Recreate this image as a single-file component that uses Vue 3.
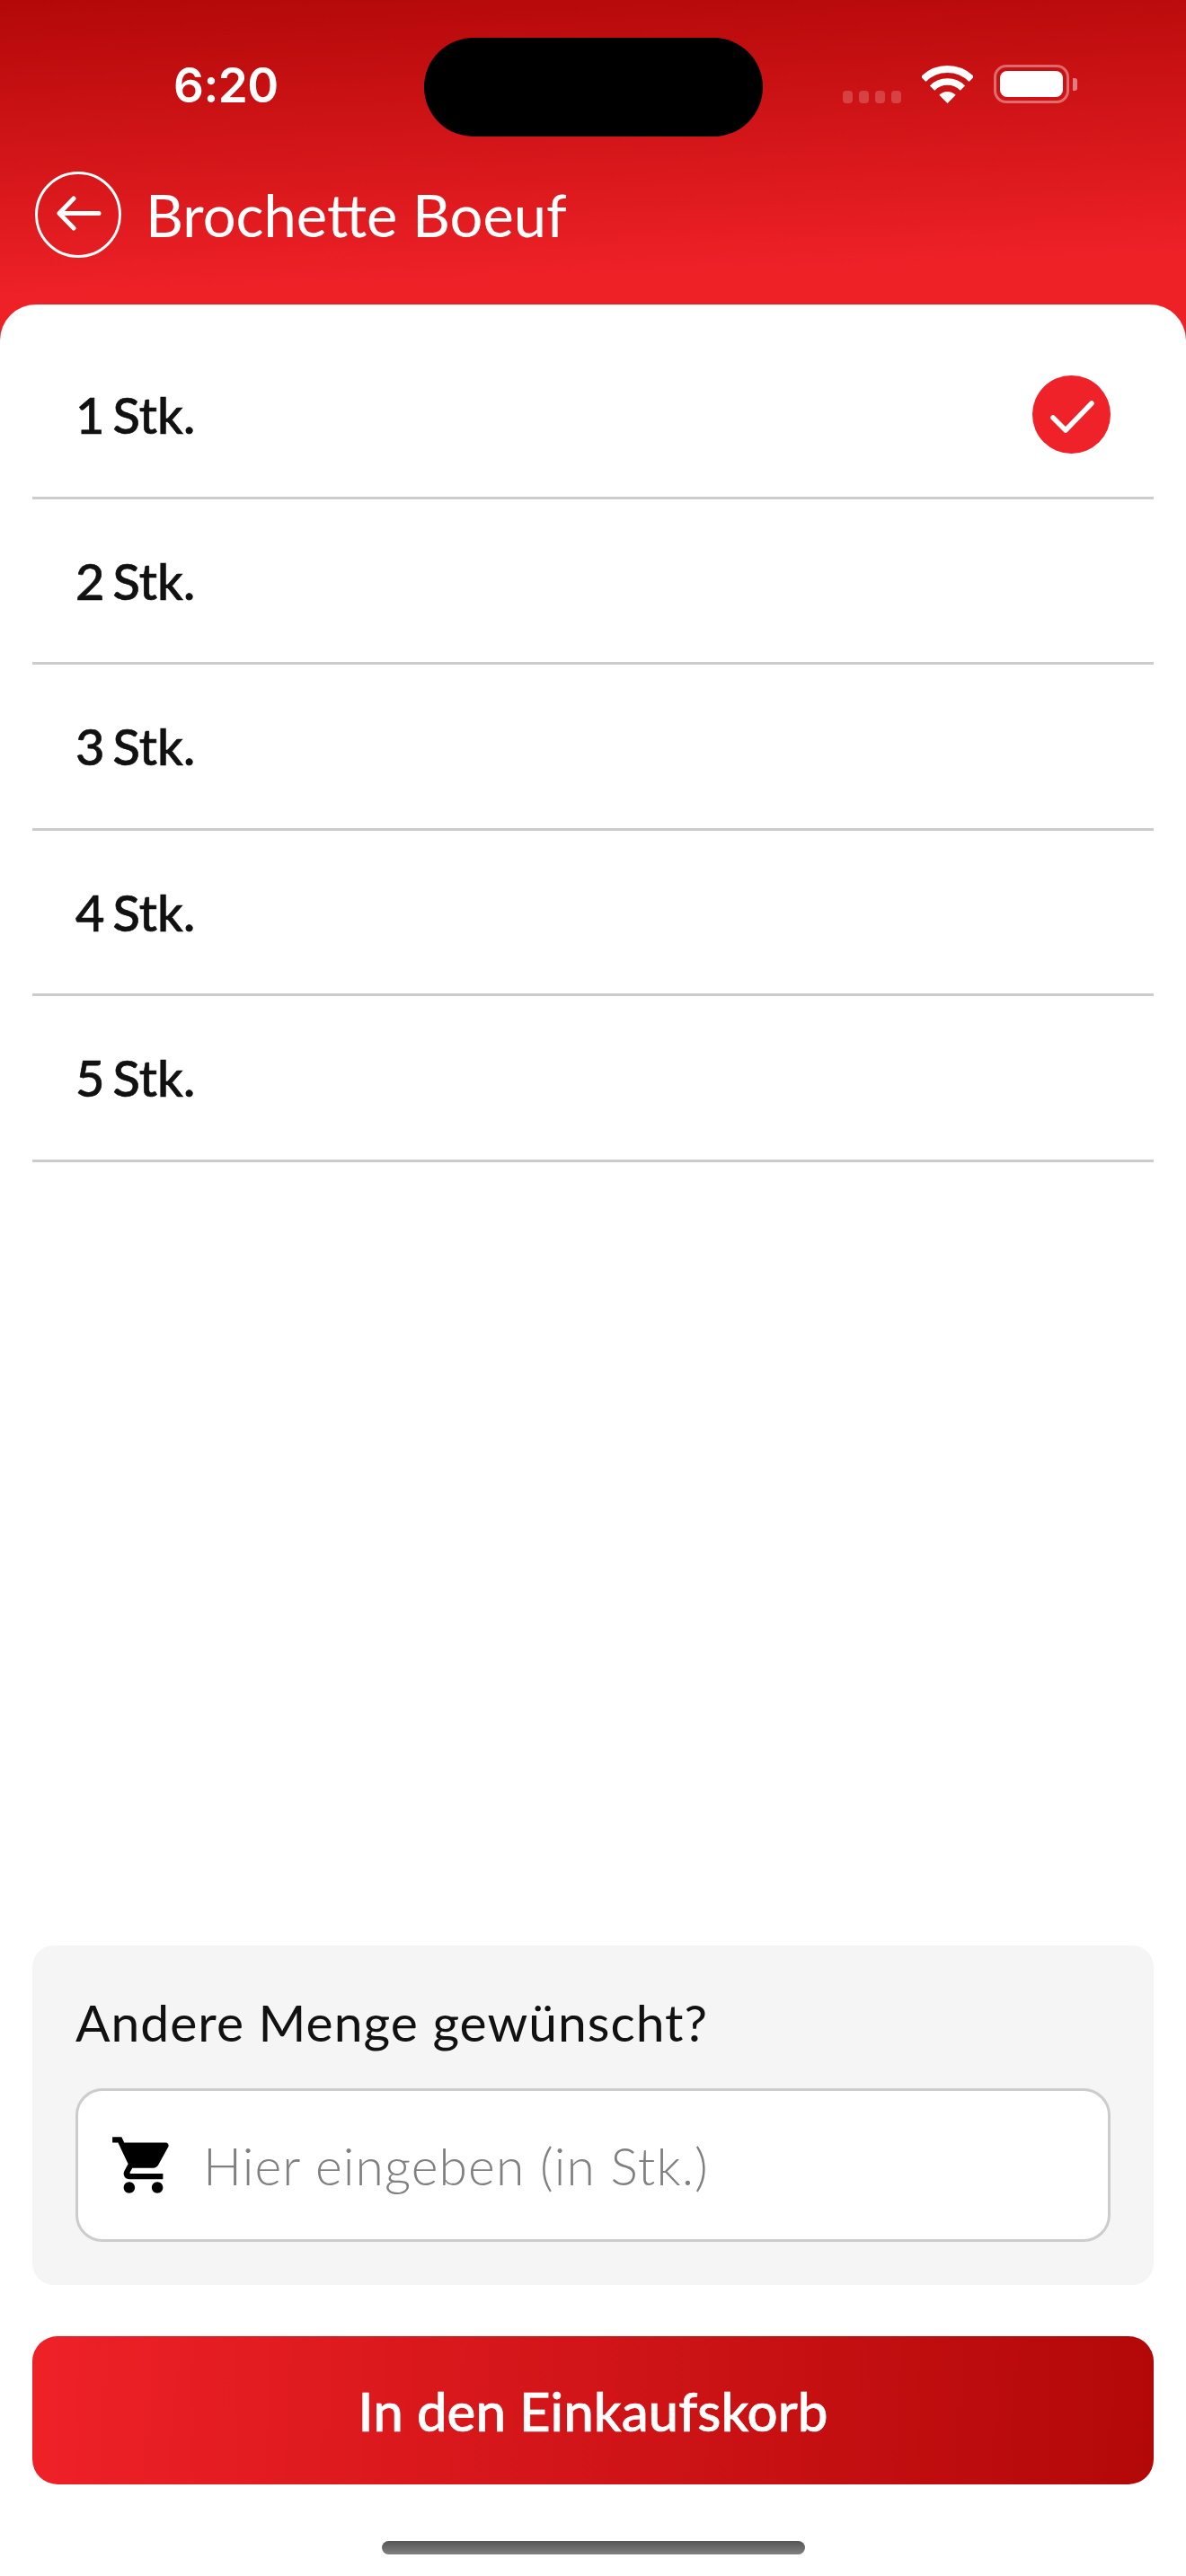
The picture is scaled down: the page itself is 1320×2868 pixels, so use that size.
<template>
  <div class="phone">
    <header class="header">
      <div class="status">
        <div class="time">6:20</div>
        <div class="island"></div>
        <div class="status-icons">
          <div class="dots">
            <span v-for="n in 4" :key="n" class="dot"></span>
          </div>
          <svg class="wifi" width="57" height="42" viewBox="0 0 57 42">
            <path d="M1.63 15.13A38 38 0 0 1 55.37 15.13" fill="none" stroke="#fff" stroke-width="8" />
            <path d="M11.53 25.03A24 24 0 0 1 45.47 25.03" fill="none" stroke="#fff" stroke-width="7.5" />
            <path d="M28.5 42L19.3 32.8A13 13 0 0 1 37.7 32.8Z" fill="#fff" />
          </svg>
          <div class="battery"><div class="battery-fill"></div></div>
          <div class="battery-cap"></div>
        </div>
      </div>
      <div class="nav">
        <svg width="96" height="96" viewBox="0 0 96 96">
          <circle cx="48" cy="48" r="46.5" fill="none" stroke="#fff" stroke-width="3" />
          <path d="M27 46.5H71M43 30L27 46.5L43 63" fill="none" stroke="#fff" stroke-width="5" stroke-linecap="round" stroke-linejoin="round" />
        </svg>
        <h1 class="title">Brochette Boeuf</h1>
      </div>
    </header>

    <main class="sheet">
      <ul class="list">
        <li v-for="q in quantities" :key="q" class="row">
          <span>{{ q }} Stk.</span>
          <svg v-if="q === selected" class="check" width="87" height="87" viewBox="0 0 87 87">
            <circle cx="43.5" cy="43.5" r="43.5" fill="#ee2228" />
            <path d="M23 47L37 61L66 31" fill="none" stroke="#fff" stroke-width="5.5" stroke-linecap="round" stroke-linejoin="round" />
          </svg>
        </li>
      </ul>

      <section class="panel">
        <div class="panel-label">Andere Menge gewünscht?</div>
        <div class="field">
          <svg class="cart" width="75" height="75" viewBox="0 0 24 24">
            <path d="M7 18c-1.1 0-1.99.9-1.99 2S5.9 22 7 22s2-.9 2-2-.9-2-2-2zM1 2v2h2l3.6 7.59-1.35 2.45c-.16.28-.25.61-.25.96 0 1.1.9 2 2 2h12v-2H7.42c-.14 0-.25-.11-.25-.25l.03-.12.9-1.63h7.45c.75 0 1.41-.41 1.75-1.03l3.58-6.47c.08-.14.12-.31.12-.48 0-.55-.45-1-1-1H5.21l-.94-2H1zm16 16c-1.1 0-1.99.9-1.99 2s.89 2 1.99 2 2-.9 2-2-.9-2-2-2z" fill="#000" />
          </svg>
          <span class="placeholder">Hier eingeben (in Stk.)</span>
        </div>
      </section>

      <button class="submit" type="button">In den Einkaufskorb</button>
      <div class="home-bar"></div>
    </main>
  </div>
</template>

<script setup>
import { ref } from 'vue'

const quantities = [1, 2, 3, 4, 5]
const selected = ref(1)
</script>

<style>
html,
body {
  margin: 0;
  background: #fff;
}
</style>

<style scoped>
.phone {
  width: 1320px;
  height: 2868px;
  display: flex;
  flex-direction: column;
  background: #ee2127;
  font-family: Lato, "Noto Sans", sans-serif;
  color: #111;
}

.header {
  height: 339px;
  flex: none;
  background: linear-gradient(178deg, #b30808 0%, #ee2127 86%);
}

.status {
  display: flex;
  height: 110px;
  padding-top: 42px;
}

.time {
  width: 472px;
  box-sizing: border-box;
  padding-left: 193px;
  font-family: Inter, sans-serif;
  font-weight: 600;
  font-size: 53px;
  letter-spacing: -0.5px;
  line-height: 106px;
  color: #fff;
}

.island {
  width: 377px;
  height: 110px;
  border-radius: 55px;
  background: #000;
}

.status-icons {
  display: flex;
  align-items: flex-end;
  height: 73px;
  margin-left: 89px;
}

.dots {
  display: flex;
  gap: 7px;
}

.dot {
  width: 11px;
  height: 14px;
  border-radius: 4px;
  background: rgba(255, 255, 255, 0.2);
}

.wifi {
  margin-left: 23px;
}

.battery {
  width: 84px;
  height: 43px;
  box-sizing: border-box;
  margin-left: 23px;
  padding: 4px;
  border: 3px solid rgba(255, 255, 255, 0.38);
  border-radius: 14px;
}

.battery-fill {
  height: 100%;
  border-radius: 8px;
  background: #fff;
}

.battery-cap {
  width: 5px;
  height: 14px;
  margin: 0 0 14px 4px;
  border-radius: 0 3px 3px 0;
  background: rgba(255, 255, 255, 0.45);
}

.nav {
  display: flex;
  align-items: center;
  gap: 27px;
  margin-top: 39px;
  padding-left: 39px;
}

.nav svg {
  flex: none;
}

.title {
  margin: 0;
  font-size: 65px;
  font-weight: 400;
  color: #fff;
}

.sheet {
  flex: 1;
  display: flex;
  flex-direction: column;
  padding: 32px 36px 24px;
  border-radius: 40px 40px 0 0;
  background: #fff;
}

.list {
  margin: 0;
  padding: 0;
  list-style: none;
}

.row {
  display: flex;
  align-items: center;
  justify-content: space-between;
  height: 184.5px;
  box-sizing: border-box;
  padding: 0 48px;
  border-bottom: 3px solid #ccc;
  font-family: "Lato Medium", Lato, sans-serif;
  font-size: 56px;
  font-weight: 500;
  word-spacing: -5px;
  -webkit-text-stroke: 0.7px #111;
}

.panel {
  margin-top: auto;
  padding: 49px 48px 48px;
  border-radius: 24px;
  background: #f5f5f5;
}

.panel-label {
  margin-bottom: 38px;
  font-size: 57px;
  letter-spacing: 1px;
  line-height: 72px;
}

.field {
  display: flex;
  align-items: center;
  gap: 29px;
  height: 171px;
  box-sizing: border-box;
  padding-left: 35px;
  border: 3px solid #ccc;
  border-radius: 30px;
  background: #fff;
}

.cart {
  flex: none;
}

.placeholder {
  font-size: 57px;
  font-weight: 300;
  letter-spacing: 1.1px;
  color: #808080;
}

.submit {
  height: 165px;
  flex: none;
  margin-top: 57px;
  padding: 0;
  border: none;
  border-radius: 28px;
  background: linear-gradient(92deg, #ee2127 0%, #b30808 100%);
  font-family: "Lato Medium", Lato, sans-serif;
  font-size: 60px;
  font-weight: 500;
  -webkit-text-stroke: 0.7px #fff;
  color: #fff;
}

.home-bar {
  width: 471px;
  height: 15px;
  flex: none;
  margin: 63px auto 0;
  border-radius: 8px;
  background: linear-gradient(#555, #808080);
}
</style>
